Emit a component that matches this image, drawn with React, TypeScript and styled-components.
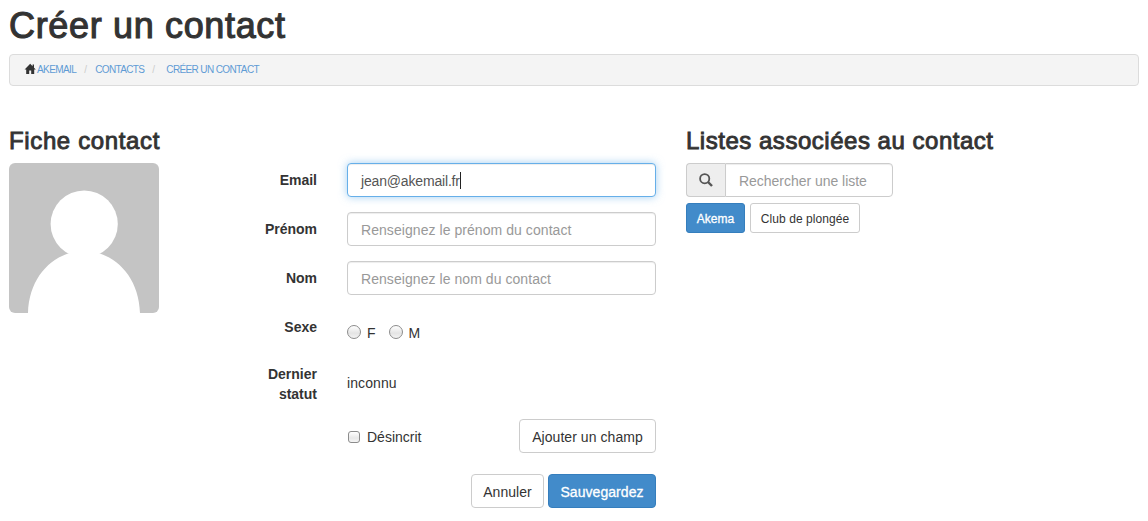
import React from 'react';
import styled, { createGlobalStyle, css } from 'styled-components';

const GlobalStyle = createGlobalStyle`
  *, *::before, *::after { box-sizing: border-box; }
  body {
    margin: 0;
    background: #fff;
    color: #333;
    font: 14px/20px "Helvetica Neue", "Liberation Sans", Arial, sans-serif;
  }
`;

const Page = styled.div`
  padding: 6px 9px 0;
`;

const Title = styled.h1`
  margin: 0 0 8px;
  font-size: 36px;
  line-height: 40px;
  font-weight: 400;
  letter-spacing: 0.66px;
  white-space: nowrap;
  -webkit-text-stroke: 1.1px #333;
`;

const Breadcrumb = styled.ol`
  display: flex;
  align-items: center;
  height: 32px;
  margin: 0;
  padding: 0 15px;
  list-style: none;
  background: #f4f4f4;
  border: 1px solid #dcdcdc;
  border-radius: 4px;
  font-size: 10px;
  text-transform: uppercase;
`;

const Crumb = styled.li<{ $gap?: number }>`
  display: flex;
  align-items: center;
  white-space: nowrap;

  &:not(:first-child)::before {
    content: '/';
    width: 4px;
    margin-left: 8px;
    margin-right: ${({ $gap = 7 }) => $gap}px;
    color: #ccc;
  }
`;

const CrumbLink = styled.a<{ $spacing: number }>`
  color: #5f9bd4;
  text-decoration: none;
  letter-spacing: ${({ $spacing }) => $spacing}px;
`;

const HomeIcon = styled.svg`
  width: 12px;
  height: 12px;
  margin: -2px 1px 0 -1px;
  fill: #333;
`;

const Columns = styled.div`
  display: grid;
  grid-template-columns: 647px 1fr;
  column-gap: 30px;
  margin-top: 42px;
`;

const SectionTitle = styled.h2<{ $spacing: number }>`
  margin: 0 0 9px;
  font-size: 24px;
  line-height: 26px;
  font-weight: 400;
  letter-spacing: ${({ $spacing }) => $spacing}px;
  white-space: nowrap;
  -webkit-text-stroke: 0.9px #333;
`;

const Card = styled.div`
  display: flex;
  justify-content: space-between;
  align-items: flex-start;
`;

const Avatar = styled.svg`
  width: 150px;
  height: 150px;
  border-radius: 6px;
  background: #c4c4c4;
`;

const Form = styled.div`
  width: 408px;
`;

const Row = styled.div<{ $height?: number; $after?: number }>`
  display: grid;
  grid-template-columns: 69px 309px;
  column-gap: 30px;
  height: ${({ $height = 34 }) => $height}px;
  margin-bottom: ${({ $after = 15 }) => $after}px;
`;

const Label = styled.label`
  padding-top: 7px;
  font-weight: 700;
  text-align: right;
`;

const field = css`
  height: 34px;
  padding: 8px 13px 6px;
  border: 1px solid #ccc;
  border-radius: 4px;
  background: #fff;
  color: #555;
  font: inherit;
  box-shadow: inset 0 1px 1px rgba(0, 0, 0, 0.075);
`;

const Input = styled.input`
  ${field}
  width: 100%;
  outline: none;
  letter-spacing: 0.06px;
  &::placeholder { color: #999; opacity: 1; }
`;

const FocusedInput = styled.div`
  ${field}
  display: flex;
  align-items: center;
  border-color: #66afe9;
  box-shadow: inset 0 1px 1px rgba(0, 0, 0, 0.075), 0 0 8px rgba(102, 175, 233, 0.6);
  letter-spacing: -0.17px;
`;

const Caret = styled.span`
  width: 1px;
  height: 17px;
  margin-top: -2px;
  background: #222;
`;

const Choices = styled.div`
  display: flex;
  gap: 13px;
  padding-top: 13px;
`;

const Choice = styled.label`
  display: flex;
  height: 20px;
  align-items: center;
`;

const Radio = styled.span`
  width: 14px;
  height: 14px;
  margin: -2px 6px 0 0;
  border: 1px solid #8c8c8c;
  border-radius: 50%;
  background: linear-gradient(#fff, #e4e4e4 60%, #f3f3f3);
`;

const Checkbox = styled.span`
  width: 12px;
  height: 12px;
  margin: -1px 7px 0 1px;
  border: 1px solid #8c8c8c;
  border-radius: 3px;
  background: linear-gradient(#fff, #e8e8e8 60%, #f5f5f5);
`;

const Status = styled.p`
  margin: 0;
  padding-top: 16px;
  letter-spacing: 0.1px;
`;

const Split = styled.div`
  display: flex;
  justify-content: space-between;
  align-items: center;

  ${Choice} { padding-top: 1px; height: 21px; margin-top: 1px; }
`;

const Actions = styled.div`
  display: flex;
  justify-content: flex-end;
  gap: 4px;
`;

const Button = styled.button<{ $primary?: boolean; $small?: boolean; $width: number }>`
  width: ${({ $width }) => $width}px;
  height: ${({ $small }) => ($small ? 30 : 34)}px;
  padding: ${({ $small }) => ($small ? 1 : 2)}px 0 0;
  border: 1px solid ${({ $primary }) => ($primary ? '#357ebd' : '#ccc')};
  border-radius: ${({ $small }) => ($small ? 3 : 4)}px;
  background: ${({ $primary }) => ($primary ? '#428bca' : '#fff')};
  color: ${({ $primary }) => ($primary ? '#fff' : '#333')};
  font: inherit;
  font-size: ${({ $small }) => ($small ? 12 : 14)}px;
  letter-spacing: 0.06px;
  white-space: nowrap;
  ${({ $primary }) => $primary && '-webkit-text-stroke: 0.3px #fff;'}
`;

const SearchGroup = styled.div`
  display: flex;
  width: 207px;
  margin-bottom: 6px;

  ${Input} {
    min-width: 0;
    border-radius: 0 4px 4px 0;
    letter-spacing: -0.03px;
  }
`;

const Addon = styled.span`
  display: flex;
  flex: none;
  align-items: center;
  justify-content: center;
  width: 39px;
  height: 34px;
  border: 1px solid #ccc;
  border-right: 0;
  border-radius: 4px 0 0 4px;
  background: #eee;
`;

const Tags = styled.div`
  display: flex;
  gap: 5px;
`;

export default function App() {
  return (
    <Page>
      <GlobalStyle />
      <Title>Créer un contact</Title>
      <Breadcrumb>
        <Crumb>
          <HomeIcon viewBox="0 0 12 12">
            <path d="M6.2 .8.6 6.6H2.2V11h3V7.6h2V11h3V6.6h1.6L10 4.7V1.5H8.6v1.8z" />
          </HomeIcon>
          <CrumbLink $spacing={-0.6}>Akemail</CrumbLink>
        </Crumb>
        <Crumb><CrumbLink $spacing={-0.64}>Contacts</CrumbLink></Crumb>
        <Crumb $gap={10}><CrumbLink $spacing={-0.62}>Créer un contact</CrumbLink></Crumb>
      </Breadcrumb>

      <Columns>
        <section>
          <SectionTitle $spacing={0.63}>Fiche contact</SectionTitle>
          <Card>
            <Avatar viewBox="0 0 150 150">
              <circle cx="75.2" cy="61" r="33.6" fill="#fff" />
              <path d="M19 150C20 119 37 98 59 90.5Q75 84 91 90.5C113 98 130 119 131 150z" fill="#fff" />
            </Avatar>
            <Form>
              <Row>
                <Label>Email</Label>
                <FocusedInput role="textbox">jean@akemail.fr<Caret /></FocusedInput>
              </Row>
              <Row>
                <Label>Prénom</Label>
                <Input placeholder="Renseignez le prénom du contact" />
              </Row>
              <Row>
                <Label>Nom</Label>
                <Input placeholder="Renseignez le nom du contact" />
              </Row>
              <Row $height={32}>
                <Label>Sexe</Label>
                <Choices>
                  <Choice><Radio />F</Choice>
                  <Choice><Radio />M</Choice>
                </Choices>
              </Row>
              <Row $height={47}>
                <Label>Dernier statut</Label>
                <Status>inconnu</Status>
              </Row>
              <Row $after={21}>
                <span />
                <Split>
                  <Choice><Checkbox />Désincrit</Choice>
                  <Button $width={137}>Ajouter un champ</Button>
                </Split>
              </Row>
              <Actions>
                <Button $width={73}>Annuler</Button>
                <Button $primary $width={108}>Sauvegardez</Button>
              </Actions>
            </Form>
          </Card>
        </section>

        <section>
          <SectionTitle $spacing={0.52}>Listes associées au contact</SectionTitle>
          <SearchGroup>
            <Addon>
              <svg width="14" height="14" viewBox="0 0 14 14" fill="none" stroke="#555">
                <circle cx="5.7" cy="5.7" r="4.6" strokeWidth="1.8" />
                <path d="M9 9l4 4" strokeWidth="2.4" />
              </svg>
            </Addon>
            <Input placeholder="Rechercher une liste" />
          </SearchGroup>
          <Tags>
            <Button $primary $small $width={59}>Akema</Button>
            <Button $small $width={110}>Club de plongée</Button>
          </Tags>
        </section>
      </Columns>
    </Page>
  );
}
